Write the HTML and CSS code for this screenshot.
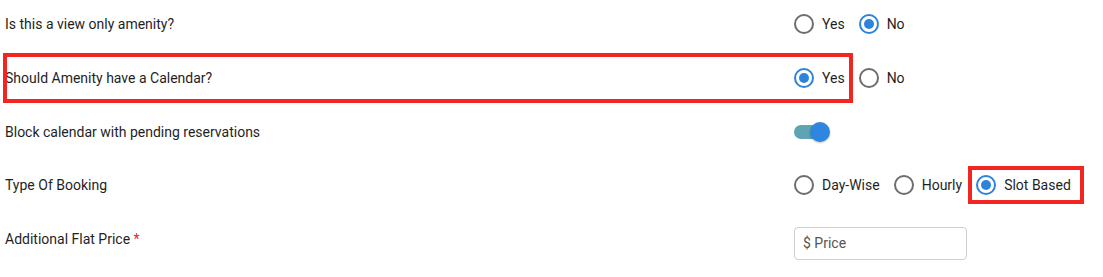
FILE: index.html
```html
<!DOCTYPE html>
<html>
  <head>
    <meta charset="utf-8">
    <title>Amenity settings</title>
    <link rel="stylesheet" href="styles.css">
  </head>
  <body>
    <div class="form">
      <!-- view only -->
      <div class="row">
        <div class="label">Is this a view only amenity?</div>
        <div class="control">
          <label class="option"><span class="radio"></span>Yes</label>
          <label class="option"><span class="radio checked"></span>No</label>
        </div>
      </div>
      <!-- calendar -->
      <div class="row mark">
        <div class="label">Should Amenity have a Calendar?</div>
        <div class="control">
          <label class="option"><span class="radio checked"></span>Yes</label>
          <label class="option"><span class="radio"></span>No</label>
        </div>
      </div>
      <!-- pending -->
      <div class="row">
        <div class="label">Block calendar with pending reservations</div>
        <div class="control">
          <span class="toggle"><span class="thumb"></span></span>
        </div>
      </div>
      <!-- booking type -->
      <div class="row">
        <div class="label">Type Of Booking</div>
        <div class="control">
          <label class="option"><span class="radio"></span>Day-Wise</label>
          <label class="option"><span class="radio"></span>Hourly</label>
          <label class="option mark-option"><span class="radio checked"></span>Slot Based</label>
        </div>
      </div>
      <!-- price -->
      <div class="row">
        <div class="label">Additional Flat Price <span class="req">*</span></div>
        <div class="control">
          <div class="input">$ Price</div>
        </div>
      </div>
    </div>
  </body>
</html>
```

FILE: styles.css
```css
body {
  margin: 0;
  background: #fff;
  font-family: Roboto, 'Liberation Sans', Arial, sans-serif;
  font-size: 14px;
  color: #1f1f1f;
}

.form {
  display: flex;
  flex-direction: column;
  gap: 7.75px;
  padding-left: 5px;
  padding-top: 1px;
}

.row {
  display: flex;
  align-items: center;
  height: 46px;
}
.label {
  width: 789px;
  flex-shrink: 0;
}
.req {
  color: #e3262b;
}
.control {
  display: flex;
  align-items: center;
}

/* annotation boxes */
.row.mark {
  width: 846px;
  outline: 4px solid #f22620;
  outline-offset: -2px;
}
.mark-option {
  outline: 4px solid #f22620;
  outline-offset: 4px;
  padding-right: 5px;
}

/* radios */
.option {
  display: flex;
  align-items: center;
  height: 22px;
  margin-right: 14px;
}
.radio {
  box-sizing: border-box;
  width: 20px;
  height: 20px;
  border: 2px solid #6d6d6d;
  border-radius: 50%;
  margin-right: 8px;
  position: relative;
}
.radio.checked {
  border-color: #2d83dc;
}
.radio.checked::after {
  content: "";
  position: absolute;
  left: 3px;
  top: 3px;
  width: 10px;
  height: 10px;
  border-radius: 50%;
  background: #2d83dc;
}

/* toggle */
.toggle {
  display: block;
  position: relative;
  width: 34px;
  height: 14px;
  border-radius: 7px;
  background: #5ea4b3;
}
.thumb {
  position: absolute;
  right: -2px;
  top: -3px;
  width: 20px;
  height: 20px;
  border-radius: 50%;
  background: #2e86de;
  box-shadow: 0 1px 2px rgba(0,0,0,0.25);
}

/* input */
.input {
  box-sizing: border-box;
  width: 173px;
  height: 33px;
  margin-top: 8px;
  border: 1px solid #cfcfcf;
  border-radius: 4px;
  padding: 0 8px;
  line-height: 31px;
  color: #555;
}
```
